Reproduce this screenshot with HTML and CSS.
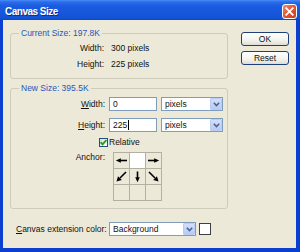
FILE: index.html
```html
<!DOCTYPE html>
<html>
<head>
<meta charset="utf-8">
<link rel="stylesheet" href="styles.css">
</head>
<body>
<div class="window">
  <div class="titlebar">
    <span class="title">Canvas Size</span>
    <span class="close"><svg width="9" height="9" viewBox="0 0 9 9"><path d="M1.2 1.2L7.8 7.8M7.8 1.2L1.2 7.8" stroke="#fff" stroke-width="1.8" stroke-linecap="square"/></svg></span>
  </div>
  <div class="frame">
    <div class="main">
      <div class="group g1">
        <span class="legend">Current Size: 197.8K</span>
        <div class="info-row"><span class="lbl">Width:</span><span>300 pixels</span></div>
        <div class="info-row"><span class="lbl">Height:</span><span>225 pixels</span></div>
      </div>
      <div class="group g2">
        <span class="legend">New Size: 395.5K</span>
        <div class="field-row">
          <span class="lbl"><u>W</u>idth:</span>
          <div class="input">0</div>
          <div class="select"><span class="sel-text">pixels</span><span class="drop"><svg width="7" height="5" viewBox="0 0 7 5"><path d="M0.8 0.8L3.5 3.6L6.2 0.8" fill="none" stroke="#4D6185" stroke-width="1.5"/></svg></span></div>
        </div>
        <div class="field-row r2">
          <span class="lbl"><u>H</u>eight:</span>
          <div class="input">225<span class="caret"></span></div>
          <div class="select"><span class="sel-text">pixels</span><span class="drop"><svg width="7" height="5" viewBox="0 0 7 5"><path d="M0.8 0.8L3.5 3.6L6.2 0.8" fill="none" stroke="#4D6185" stroke-width="1.5"/></svg></span></div>
        </div>
        <div class="check-row">
          <span class="checkbox"><svg width="7" height="7" viewBox="0 0 7 7"><path d="M0.6 3.2L2.6 5.4L6.4 1" fill="none" stroke="#21A121" stroke-width="1.9"/></svg></span>
          <span>Relative</span>
        </div>
        <div class="anchor-row">
          <span class="lbl anchor-lbl">Anchor:</span>
          <div class="anchor-grid">
            <div class="cell"><svg width="15" height="15" viewBox="0 0 15 15"><path d="M6 7.5H13" stroke="#000" stroke-width="1.6"/><path d="M1.8 7.5L6.8 5.2V9.8Z" fill="#000"/></svg></div>
            <div class="cell sel"></div>
            <div class="cell"><svg width="15" height="15" viewBox="0 0 15 15"><path d="M2 7.5H9" stroke="#000" stroke-width="1.6"/><path d="M13.2 7.5L8.2 5.2V9.8Z" fill="#000"/></svg></div>
            <div class="cell"><svg width="15" height="15" viewBox="0 0 15 15"><path d="M12 3L6 9" stroke="#000" stroke-width="1.6"/><path d="M2.5 12.5L4 7.2L7.8 11Z" fill="#000"/></svg></div>
            <div class="cell"><svg width="15" height="15" viewBox="0 0 15 15"><path d="M7.5 2.5V9" stroke="#000" stroke-width="1.6"/><path d="M7.5 13.3L5.2 8.3H9.8Z" fill="#000"/></svg></div>
            <div class="cell"><svg width="15" height="15" viewBox="0 0 15 15"><path d="M3 3L9 9" stroke="#000" stroke-width="1.6"/><path d="M12.5 12.5L7.2 11L11 7.2Z" fill="#000"/></svg></div>
            <div class="cell"></div>
            <div class="cell"></div>
            <div class="cell"></div>
          </div>
        </div>
      </div>
      <div class="ext-row">
        <span class="ext-lbl"><u>C</u>anvas extension color:</span>
        <div class="select ext-select"><span class="sel-text">Background</span><span class="drop"><svg width="7" height="5" viewBox="0 0 7 5"><path d="M0.8 0.8L3.5 3.6L6.2 0.8" fill="none" stroke="#4D6185" stroke-width="1.5"/></svg></span></div>
        <span class="swatch"></span>
      </div>
    </div>
    <div class="buttons">
      <div class="btn">OK</div>
      <div class="btn">Reset</div>
    </div>
  </div>
</div>
</body>
</html>
```
FILE: styles.css
```css
* { box-sizing: border-box; }
html, body { margin: 0; padding: 0; }
body {
  width: 300px;
  height: 252px;
  overflow: hidden;
  font-family: "Liberation Sans", Arial, sans-serif;
  font-size: 8.5px;
  color: #111;
}
.window {
  width: 300px;
  height: 252px;
  display: flex;
  flex-direction: column;
  background: #ECE9D8;
}
.titlebar {
  height: 20px;
  flex: none;
  display: flex;
  justify-content: space-between;
  align-items: flex-start;
  padding: 0 3px 0 5px;
  background: linear-gradient(#4A8CF6 0, #2B6CEA 2px, #1A5CE0 6px, #1656DB 14px, #1150D2 19px, #0A44BE 20px);
}
.title {
  margin-top: 5px;
  font-family: "Liberation Sans", sans-serif;
  font-weight: bold;
  font-size: 10px;
  letter-spacing: -0.5px;
  line-height: 13px;
  color: #fff;
  text-shadow: 1px 1px 0 #0B2C8A;
}
.close {
  margin-top: 4px;
  width: 15px;
  height: 15px;
  border: 1px solid #fff;
  border-radius: 3px;
  background: linear-gradient(135deg, #F0906E 0%, #E2583A 45%, #C8401F 100%);
  display: flex;
  align-items: center;
  justify-content: center;
}
.frame {
  flex: 1;
  display: flex;
  gap: 13px;
  padding: 13px 0 0 7px;
  border-left: 3px solid #0A3FCF;
  border-right: 4px solid #0A3FCF;
  border-bottom: 4px solid #0A3FCF;
}
.main {
  width: 218px;
  display: flex;
  flex-direction: column;
}
.group {
  position: relative;
  border: 1px solid #CFCCBC;
  border-radius: 3px;
}
.legend {
  position: absolute;
  top: -7px;
  left: 8px;
  padding: 0 2px;
  line-height: 12px;
  background: #ECE9D8;
  color: #2A55B8;
}
.g1 {
  height: 46px;
  padding-top: 6px;
}
.info-row {
  display: grid;
  grid-template-columns: 93px auto;
  column-gap: 7px;
  height: 16px;
  line-height: 16px;
}
.lbl { text-align: right; }
.g2 {
  margin-top: 9px;
  height: 121px;
  padding-top: 8px;
}
.field-row {
  display: grid;
  grid-template-columns: 94px 48px 62px;
  column-gap: 4px;
  align-items: center;
  height: 14px;
}
.r2 { margin-top: 7px; }
.input {
  height: 14px;
  border: 1px solid #7F9DB9;
  background: #fff;
  padding-left: 3px;
  line-height: 12px;
  display: flex;
  align-items: center;
}
.caret {
  display: inline-block;
  width: 1px;
  height: 10px;
  background: #000;
  margin-left: 1px;
}
.select {
  height: 14px;
  border: 1px solid #7F9DB9;
  background: #fff;
  display: flex;
  align-items: center;
  justify-content: space-between;
  padding-left: 3px;
}
.sel-text { line-height: 12px; }
.drop {
  width: 12px;
  height: 12px;
  background: linear-gradient(#D2DEFC, #B6CBF6);
  border: 1px solid #B9CCF4;
  border-radius: 1px;
  display: flex;
  align-items: center;
  justify-content: center;
}
.check-row {
  margin-top: 4px;
  height: 12px;
  padding-left: 88px;
  display: flex;
  align-items: center;
  gap: 1px;
}
.checkbox {
  width: 9px;
  height: 9px;
  border: 1px solid #1C5180;
  background: linear-gradient(135deg, #DCDCD7, #fff);
  display: flex;
  align-items: center;
  justify-content: center;
}
.anchor-row {
  margin-top: 4px;
  display: flex;
  align-items: flex-start;
}
.anchor-lbl {
  width: 94px;
  line-height: 10px;
}
.anchor-grid {
  margin-left: 8px;
  display: grid;
  grid-template-columns: repeat(3, 15px);
  grid-template-rows: repeat(3, 15px);
  gap: 1px;
  padding: 1px;
  background: #B3B0A2;
}
.cell {
  background: #ECE9D8;
  display: flex;
}
.cell.sel { background: #fff; }
.ext-row {
  margin-top: 13px;
  height: 14px;
  padding-left: 6px;
  display: flex;
  align-items: center;
}
.ext-lbl {
  width: 90px;
  white-space: nowrap;
}
.ext-select {
  margin-left: 3px;
  width: 87px;
}
.swatch {
  margin-left: 3px;
  width: 12px;
  height: 12px;
  border: 1px solid #404040;
  background: #fff;
}
.buttons {
  width: 48px;
  margin-top: -1px;
  display: flex;
  flex-direction: column;
  gap: 5px;
}
.btn {
  height: 14px;
  border: 1px solid #1F3F78;
  border-radius: 3px;
  background: linear-gradient(#FFFFFF, #F3F3EE 60%, #DEDDD4);
  text-align: center;
  line-height: 12px;
}
```
